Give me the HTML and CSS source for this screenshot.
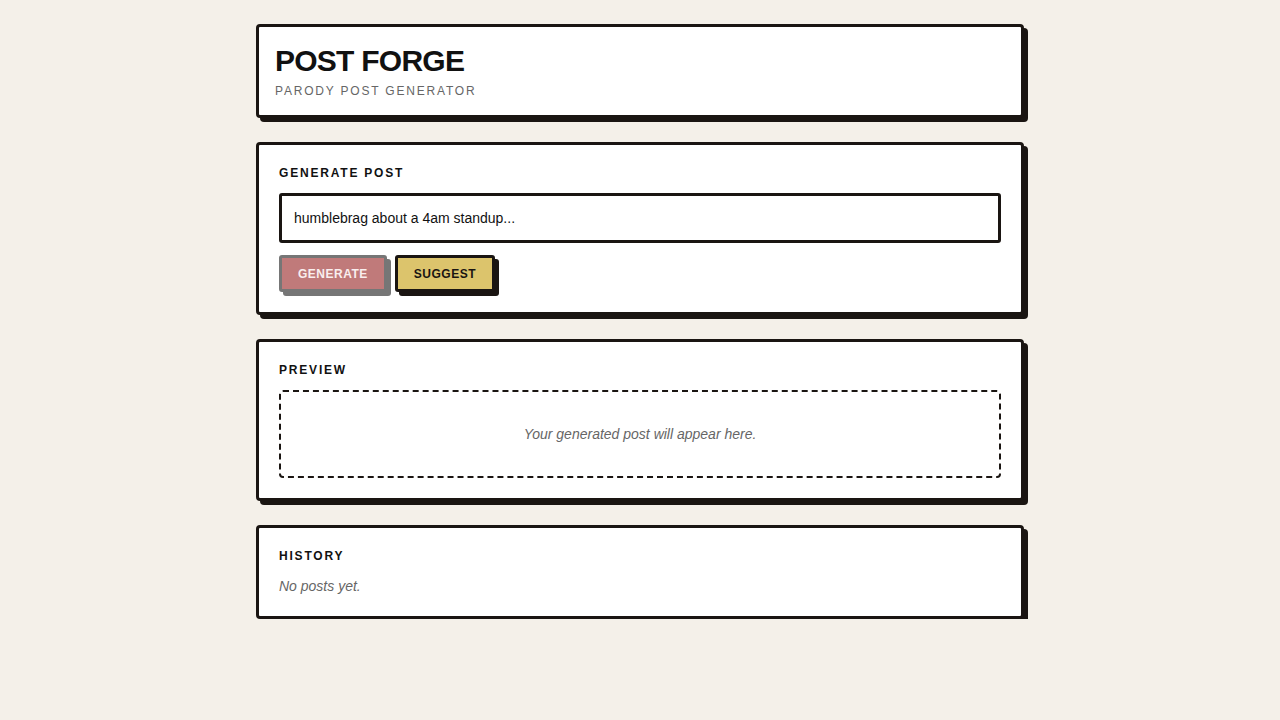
FILE: index.html
```html
<!DOCTYPE html>
<html lang="en">
<head>
<meta charset="utf-8">
<title>Post Forge</title>
<link rel="stylesheet" href="styles.css">
</head>
<body>
<main class="app">
  <header class="card header-card">
    <h1 class="title">POST FORGE</h1>
    <p class="subtitle">PARODY POST GENERATOR</p>
  </header>

  <section class="card">
    <h2 class="label">GENERATE POST</h2>
    <input class="prompt" type="text" value="humblebrag about a 4am standup...">
    <div class="actions">
      <button class="btn btn-generate" disabled>GENERATE</button>
      <button class="btn btn-suggest">SUGGEST</button>
    </div>
  </section>

  <section class="card">
    <h2 class="label">PREVIEW</h2>
    <div class="preview">Your generated post will appear here.</div>
  </section>

  <section class="card">
    <h2 class="label">HISTORY</h2>
    <p class="empty">No posts yet.</p>
  </section>
</main>
</body>
</html>
```

FILE: styles.css
```css
* { box-sizing: border-box; }

html, body {
  margin: 0;
  padding: 0;
  background: #f4f0e9;
  font-family: "Liberation Sans", Arial, sans-serif;
  color: #111;
}

.app {
  width: 768px;
  margin: 24px auto 0;
  display: flex;
  flex-direction: column;
  gap: 24px;
}

.card {
  background: #fff;
  border: 3px solid #1a1512;
  border-radius: 4px;
  box-shadow: 4px 4px 0 #1a1512;
  padding: 20px;
}

.header-card {
  padding: 16px 16px 17px;
}

.title {
  margin: 0;
  font-size: 30px;
  line-height: 36px;
  font-weight: 700;
  letter-spacing: -0.75px;
  color: #111;
}

.subtitle {
  margin: 5px 0 0;
  font-size: 12px;
  line-height: 14px;
  letter-spacing: 1.8px;
  color: #666;
}

.label {
  margin: 0 0 12px;
  font-size: 12px;
  line-height: 16px;
  font-weight: 700;
  letter-spacing: 1.8px;
  color: #111;
}

.prompt {
  display: block;
  width: 100%;
  height: 50px;
  border: 3px solid #1a1512;
  border-radius: 3px;
  padding: 0 12px;
  font-family: "Liberation Sans", Arial, sans-serif;
  font-size: 14px;
  color: #111;
  background: #fff;
  outline: none;
}

.actions {
  display: flex;
  gap: 8px;
  margin-top: 12px;
}

.btn {
  font-family: "Liberation Sans", Arial, sans-serif;
  font-size: 12px;
  line-height: 13px;
  font-weight: 700;
  letter-spacing: 0.5px;
  padding: 10px 16px 8px;
  border: 3px solid #1a1512;
  border-radius: 3px;
  box-shadow: 4px 4px 0 #1a1512;
  cursor: pointer;
}

.btn-generate {
  background: #c07a7a;
  color: #f9eeee;
  border-color: #767676;
  box-shadow: 4px 4px 0 #767676;
  cursor: default;
}

.btn-suggest {
  background: #dcc46c;
  color: #1a1512;
}

.preview {
  border: 2px dashed #1a1512;
  border-radius: 4px;
  padding: 32px 16px;
  text-align: center;
  font-size: 14px;
  line-height: 20px;
  font-style: italic;
  color: #666;
}

.empty {
  margin: 0;
  font-size: 14px;
  line-height: 20px;
  font-style: italic;
  color: #666;
}
```
